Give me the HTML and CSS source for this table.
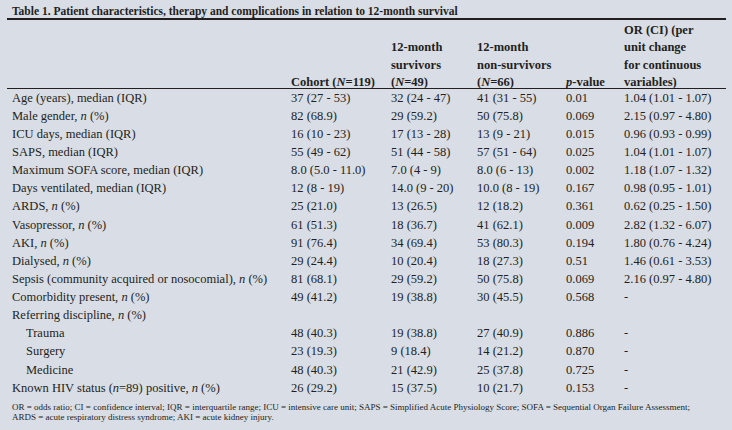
FILE: index.html
```html
<!DOCTYPE html>
<html lang="en">
<head>
<meta charset="utf-8">
<title>Table 1</title>
<link rel="stylesheet" href="styles.css">
</head>
<body>
<div class="wrap">
  <div class="caption">Table 1. Patient characteristics, therapy and complications in relation to 12-month survival</div>
  <table class="data">
    <colgroup>
      <col class="c-label">
      <col class="c-cohort">
      <col class="c-surv">
      <col class="c-non">
      <col class="c-p">
      <col class="c-or">
    </colgroup>
    <thead>
      <tr>
        <th></th>
        <th><div class="h">Cohort (<i>N</i>=119)</div></th>
        <th><div class="h">12-month<br>survivors<br>(<i>N</i>=49)</div></th>
        <th><div class="h">12-month<br>non-survivors<br>(<i>N</i>=66)</div></th>
        <th><div class="h"><i>p</i>-value</div></th>
        <th><div class="h">OR (CI) (per<br>unit change<br>for continuous<br>variables)</div></th>
      </tr>
    </thead>
    <tbody>
      <tr><td>Age (years), median (IQR)</td><td>37 (27 - 53)</td><td>32 (24 - 47)</td><td>41 (31 - 55)</td><td>0.01</td><td>1.04 (1.01 - 1.07)</td></tr>
      <tr><td>Male gender, <i>n</i> (%)</td><td>82 (68.9)</td><td>29 (59.2)</td><td>50 (75.8)</td><td>0.069</td><td>2.15 (0.97 - 4.80)</td></tr>
      <tr><td>ICU days, median (IQR)</td><td>16 (10 - 23)</td><td>17 (13 - 28)</td><td>13 (9 - 21)</td><td>0.015</td><td>0.96 (0.93 - 0.99)</td></tr>
      <tr><td>SAPS, median (IQR)</td><td>55 (49 - 62)</td><td>51 (44 - 58)</td><td>57 (51 - 64)</td><td>0.025</td><td>1.04 (1.01 - 1.07)</td></tr>
      <tr><td>Maximum SOFA score, median (IQR)</td><td>8.0 (5.0 - 11.0)</td><td>7.0 (4 - 9)</td><td>8.0 (6 - 13)</td><td>0.002</td><td>1.18 (1.07 - 1.32)</td></tr>
      <tr><td>Days ventilated, median (IQR)</td><td>12 (8 - 19)</td><td>14.0 (9 - 20)</td><td>10.0 (8 - 19)</td><td>0.167</td><td>0.98 (0.95 - 1.01)</td></tr>
      <tr><td>ARDS, <i>n</i> (%)</td><td>25 (21.0)</td><td>13 (26.5)</td><td>12 (18.2)</td><td>0.361</td><td>0.62 (0.25 - 1.50)</td></tr>
      <tr><td>Vasopressor, <i>n</i> (%)</td><td>61 (51.3)</td><td>18 (36.7)</td><td>41 (62.1)</td><td>0.009</td><td>2.82 (1.32 - 6.07)</td></tr>
      <tr><td>AKI, <i>n</i> (%)</td><td>91 (76.4)</td><td>34 (69.4)</td><td>53 (80.3)</td><td>0.194</td><td>1.80 (0.76 - 4.24)</td></tr>
      <tr><td>Dialysed, <i>n</i> (%)</td><td>29 (24.4)</td><td>10 (20.4)</td><td>18 (27.3)</td><td>0.51</td><td>1.46 (0.61 - 3.53)</td></tr>
      <tr><td>Sepsis (community acquired or nosocomial), <i>n</i> (%)</td><td>81 (68.1)</td><td>29 (59.2)</td><td>50 (75.8)</td><td>0.069</td><td>2.16 (0.97 - 4.80)</td></tr>
      <tr><td>Comorbidity present, <i>n</i> (%)</td><td>49 (41.2)</td><td>19 (38.8)</td><td>30 (45.5)</td><td>0.568</td><td>-</td></tr>
      <tr><td>Referring discipline, <i>n</i> (%)</td><td></td><td></td><td></td><td></td><td></td></tr>
      <tr><td class="indent">Trauma</td><td>48 (40.3)</td><td>19 (38.8)</td><td>27 (40.9)</td><td>0.886</td><td>-</td></tr>
      <tr><td class="indent">Surgery</td><td>23 (19.3)</td><td>9 (18.4)</td><td>14 (21.2)</td><td>0.870</td><td>-</td></tr>
      <tr><td class="indent">Medicine</td><td>48 (40.3)</td><td>21 (42.9)</td><td>25 (37.8)</td><td>0.725</td><td>-</td></tr>
      <tr><td>Known HIV status (<i>n</i>=89) positive, <i>n</i> (%)</td><td>26 (29.2)</td><td>15 (37.5)</td><td>10 (21.7)</td><td>0.153</td><td>-</td></tr>
    </tbody>
  </table>
  <p class="note">OR = odds ratio; CI = confidence interval; IQR = interquartile range; ICU = intensive care unit; SAPS = Simplified Acute Physiology Score; SOFA = Sequential Organ Failure Assessment;<br>ARDS = acute respiratory distress syndrome; AKI = acute kidney injury.</p>
</div>
</body>
</html>
```

FILE: styles.css
```css
html, body {
  margin: 0;
  padding: 0;
  background: #d9dde6;
}

body {
  font-family: "Liberation Serif", "DejaVu Serif", serif;
  color: #231f20;
  width: 732px;
  height: 430px;
  overflow: hidden;
}

.wrap {
  padding: 0 6px 0 7px;
}

.caption {
  font-weight: bold;
  font-size: 11.5px;
  line-height: 14px;
  padding: 4px 0 0 5px;
  height: 14px;
  border-bottom: 2px solid #231f20;
}

.data {
  width: 719px;
  border-collapse: collapse;
  table-layout: fixed;
  font-size: 12.5px;
}

.c-label { width: 279px; }
.c-cohort { width: 100px; }
.c-surv { width: 86px; }
.c-non { width: 89px; }
.c-p { width: 58px; }
.c-or { width: 107px; }

.data th {
  font-weight: bold;
  text-align: left;
  vertical-align: bottom;
  line-height: 17.4px;
  padding: 2px 0 0 5px;
  border-bottom: 1px solid #231f20;
}

.data th .h {
  margin-bottom: -4px;
}

.data td {
  padding: 0 0 0 5px;
  line-height: 18.125px;
  white-space: nowrap;
  vertical-align: middle;
}

.data td.indent {
  padding-left: 19px;
}

.note {
  margin: 5px 0 0 0;
  padding-left: 5px;
  font-size: 9px;
  line-height: 10px;
  white-space: nowrap;
}
```
